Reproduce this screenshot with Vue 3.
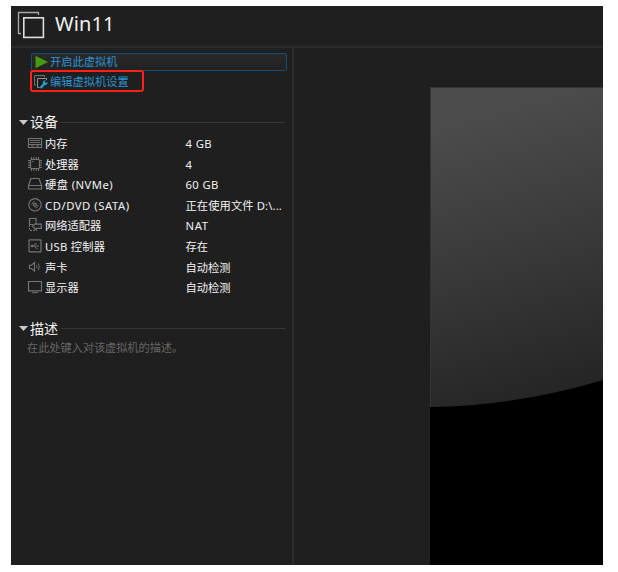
<script setup>
const devices = [
  { icon: 'memory', name: '内存', value: '4 GB' },
  { icon: 'cpu', name: '处理器', value: '4' },
  { icon: 'disk', name: '硬盘 (NVMe)', value: '60 GB' },
  { icon: 'cd', name: 'CD/DVD (SATA)', value: '正在使用文件 D:\\...' },
  { icon: 'net', name: '网络适配器', value: 'NAT' },
  { icon: 'usb', name: 'USB 控制器', value: '存在' },
  { icon: 'sound', name: '声卡', value: '自动检测' },
  { icon: 'display', name: '显示器', value: '自动检测' }
]
</script>

<template>
  <main class="window">
    <header class="header">
      <svg class="vm-icon" width="28" height="28" viewBox="0 0 28 28" fill="none">
        <path d="M4 22.5H1.5V1.5H21.5V4" stroke="#a9a9a9" stroke-width="1.3" />
        <rect x="6.8" y="6.8" width="19.6" height="19.6" stroke="#dedede" stroke-width="1.6" />
      </svg>
      <h1 class="title">Win11</h1>
    </header>
    <div class="body">
      <aside class="side">
        <button class="action power">
          <svg width="14" height="14" viewBox="0 0 14 14"><path d="M.5 .7 13 7 .5 13.3Z" fill="#459b0c" /></svg>
          <span>开启此虚拟机</span>
        </button>
        <button class="action edit">
          <svg width="14" height="14" viewBox="0 0 14 14" fill="none">
            <path d="M2 10H.6V.6H10.5V2" stroke="#777" />
            <path d="M5.5 12.5H3.5V3.5H12.5V5" stroke="#929292" />
            <path d="M6.5 13 10 9.2" stroke="#239fd0" stroke-width="2.4" />
            <path d="M12 5.2 10.6 7.1 12 8.2 13.6 6.8C14 9 12.3 10.6 10.2 9.8L8.9 8.5C8.5 6.4 10 5 12 5.2Z" fill="#28a9dc" />
          </svg>
          <span>编辑虚拟机设置</span>
        </button>

        <h2 class="section">
          <svg width="9" height="5" viewBox="0 0 9 5"><path d="M0 0H9L4.5 5Z" fill="#c9c9c9" /></svg>
          <span>设备</span><i class="rule"></i>
        </h2>
        <ul class="devices">
          <li v-for="d in devices" :key="d.name" class="device">
            <svg class="icon" width="16" height="16" viewBox="0 0 16 16" fill="none" stroke="#747474" stroke-width="1.2">
              <template v-if="d.icon === 'memory'">
                <path d="M1.5 3.5H14.5V12.5H1.5ZM1.5 9.5H14.5" />
                <path d="M3 5.5H13M3 7.5H13" stroke-width=".9" />
                <path d="M4 11H7M9 11H12" stroke-width=".9" />
              </template>
              <template v-else-if="d.icon === 'cpu'">
                <rect x="3.5" y="3.5" width="9" height="9" rx="1" />
                <path d="M4.5 1V3M6.8 1V3M9.2 1V3M11.5 1V3M4.5 13V15M6.8 13V15M9.2 13V15M11.5 13V15M1 4.5H3M1 6.8H3M1 9.2H3M1 11.5H3M13 4.5H15M13 6.8H15M13 9.2H15M13 11.5H15" stroke-width="1" />
                <path d="M5 5.5H6.5" stroke-width="1" />
              </template>
              <template v-else-if="d.icon === 'disk'">
                <path d="M1.5 9.5 4 2.5H12L14.5 9.5V13H1.5ZM1.5 9.5H14.5" />
              </template>
              <template v-else-if="d.icon === 'cd'">
                <circle cx="8" cy="7.8" r="6.2" /><circle cx="8" cy="7.8" r="1.5" />
                <path d="M4.8 7.8A3.2 3.2 0 0 1 8 4.6M11.2 7.8A3.2 3.2 0 0 1 8 11" stroke-width=".7" />
              </template>
              <template v-else-if="d.icon === 'net'">
                <path d="M9 5V1.5H2.5V7.5H6" />
                <path d="M2.5 8V13.5H10" stroke-dasharray="2 1" stroke-width="1" />
                <path d="M5.5 9.2 9 6V7.2H14.3V11.3H9V12.8Z" />
              </template>
              <template v-else-if="d.icon === 'usb'">
                <rect x="2" y="1.8" width="12" height="12" rx=".5" />
                <path d="M4.5 8H12M6 8 8 5.7H10M7.5 8 9 10.3H10.5" stroke-width=".9" />
                <circle cx="5" cy="8" r=".7" fill="#747474" />
              </template>
              <template v-else-if="d.icon === 'sound'">
                <path d="M2.5 6.2H4.5L7.5 3.5V12L4.5 9.5H2.5Z" stroke-width="1.1" />
                <path d="M9.5 6.2Q10.7 7.8 9.5 9.5M11.3 4.5Q13.5 7.8 11.3 11.2" stroke-width=".9" />
              </template>
              <template v-else>
                <path d="M1.5 2.5H14.5V11.8H1.5Z" />
                <path d="M5 13.7H11" stroke-width="1" />
              </template>
            </svg>
            <span class="name" :class="d.icon">{{ d.name }}</span>
            <span class="value" :class="d.icon">{{ d.value }}</span>
          </li>
        </ul>

        <h2 class="section description">
          <svg width="9" height="5" viewBox="0 0 9 5"><path d="M0 0H9L4.5 5Z" fill="#c9c9c9" /></svg>
          <span>描述</span><i class="rule"></i>
        </h2>
        <p class="hint">在此处键入对该虚拟机的描述。</p>
      </aside>
      <section class="preview">
        <svg class="screen" width="173" height="478" viewBox="0 0 173 478">
          <defs>
            <linearGradient id="sheen" gradientUnits="userSpaceOnUse" x1="30" y1="30" x2="113" y2="318">
              <stop offset="0" stop-color="#4c4c4c" />
              <stop offset=".5" stop-color="#393939" />
              <stop offset="1" stop-color="#242424" />
            </linearGradient>
          </defs>
          <rect width="173" height="478" fill="#000" />
          <path d="M0 0H173V293Q87 319 0 320Z" fill="url(#sheen)" />
          <path d="M.5 320V.5H173" fill="none" stroke="#343434" />
        </svg>
      </section>
    </div>
  </main>
</template>

<style>
body { background: #fff; }
</style>

<style scoped>
.window {
  box-sizing: border-box;
  display: flex;
  flex-direction: column;
  width: 592px;
  height: 559px;
  margin: 6px 0 0 11px;
  overflow: hidden;
  background: #1f1f1f;
  color: #f2f2f2;
  font-family: "Noto Sans", "Noto Sans CJK SC", sans-serif;
  font-size: 11.25px;
}
.header {
  box-sizing: border-box;
  display: flex;
  flex: 0 0 42px;
  padding: 5px 0 0 6px;
  border-bottom: 2px solid #2b2b2b;
}
.title {
  margin: -1px 0 0 10px;
  font-size: 20px;
  font-weight: 400;
  line-height: 28px;
  letter-spacing: .1px;
}
.body { display: flex; flex: 1; min-height: 0; }
.side {
  box-sizing: border-box;
  width: 283px;
  flex: none;
  padding: 5px 0 0 8px;
  border-right: 2px solid #2b2b2b;
}
.action {
  box-sizing: border-box;
  display: flex;
  align-items: center;
  height: 18px;
  padding: 0 0 0 3px;
  background: none;
  color: #2d91d0;
  font: inherit;
  line-height: 16px;
  gap: 2px;
  white-space: nowrap;
}
.action svg { flex: none; }
.power {
  width: 256px;
  margin-left: 12px;
  gap: 1px;
  border: 1px solid #164d79;
  border-radius: 2px;
  background: linear-gradient(#292929, #222);
}
.edit {
  width: 114px;
  height: 22px;
  margin: -1px 0 0 11px;
  padding: 1px 0 0 2px;
  border: 2px solid #ff2018;
  border-radius: 3px;
}
.section {
  display: flex;
  align-items: center;
  height: 20px;
  margin: 20px 7px 0 0;
  font-size: 14px;
  font-weight: 400;
  line-height: 20px;
}
.section svg { margin-right: 2px; }
.rule { flex: 1; height: 1px; margin-left: 3px; background: #373737; }
.devices { margin: 0; padding: 0; list-style: none; }
.device {
  display: grid;
  grid-template-columns: 16px 142px 1fr;
  align-items: center;
  height: 20.6px;
  padding-left: 8px;
  line-height: 20px;
  white-space: nowrap;
}
.name, .value { padding-top: 2px; }
.name { padding-left: 2px; }
.name.disk { letter-spacing: .45px; }
.name.cd { letter-spacing: .55px; }
.name.usb { letter-spacing: .25px; }
.value { padding-left: .5px; }
.value.memory, .value.disk { letter-spacing: .4px; }
.value.net { letter-spacing: .6px; }
.value.cd { letter-spacing: .12px; }
.description { margin-top: 22px; }
.hint { margin: 0 0 0 8px; color: #656565; line-height: 18px; letter-spacing: -.1px; }
.preview { display: flex; flex: 1; padding: 39px 0 0 136px; }
.screen { flex: none; display: block; }
</style>
